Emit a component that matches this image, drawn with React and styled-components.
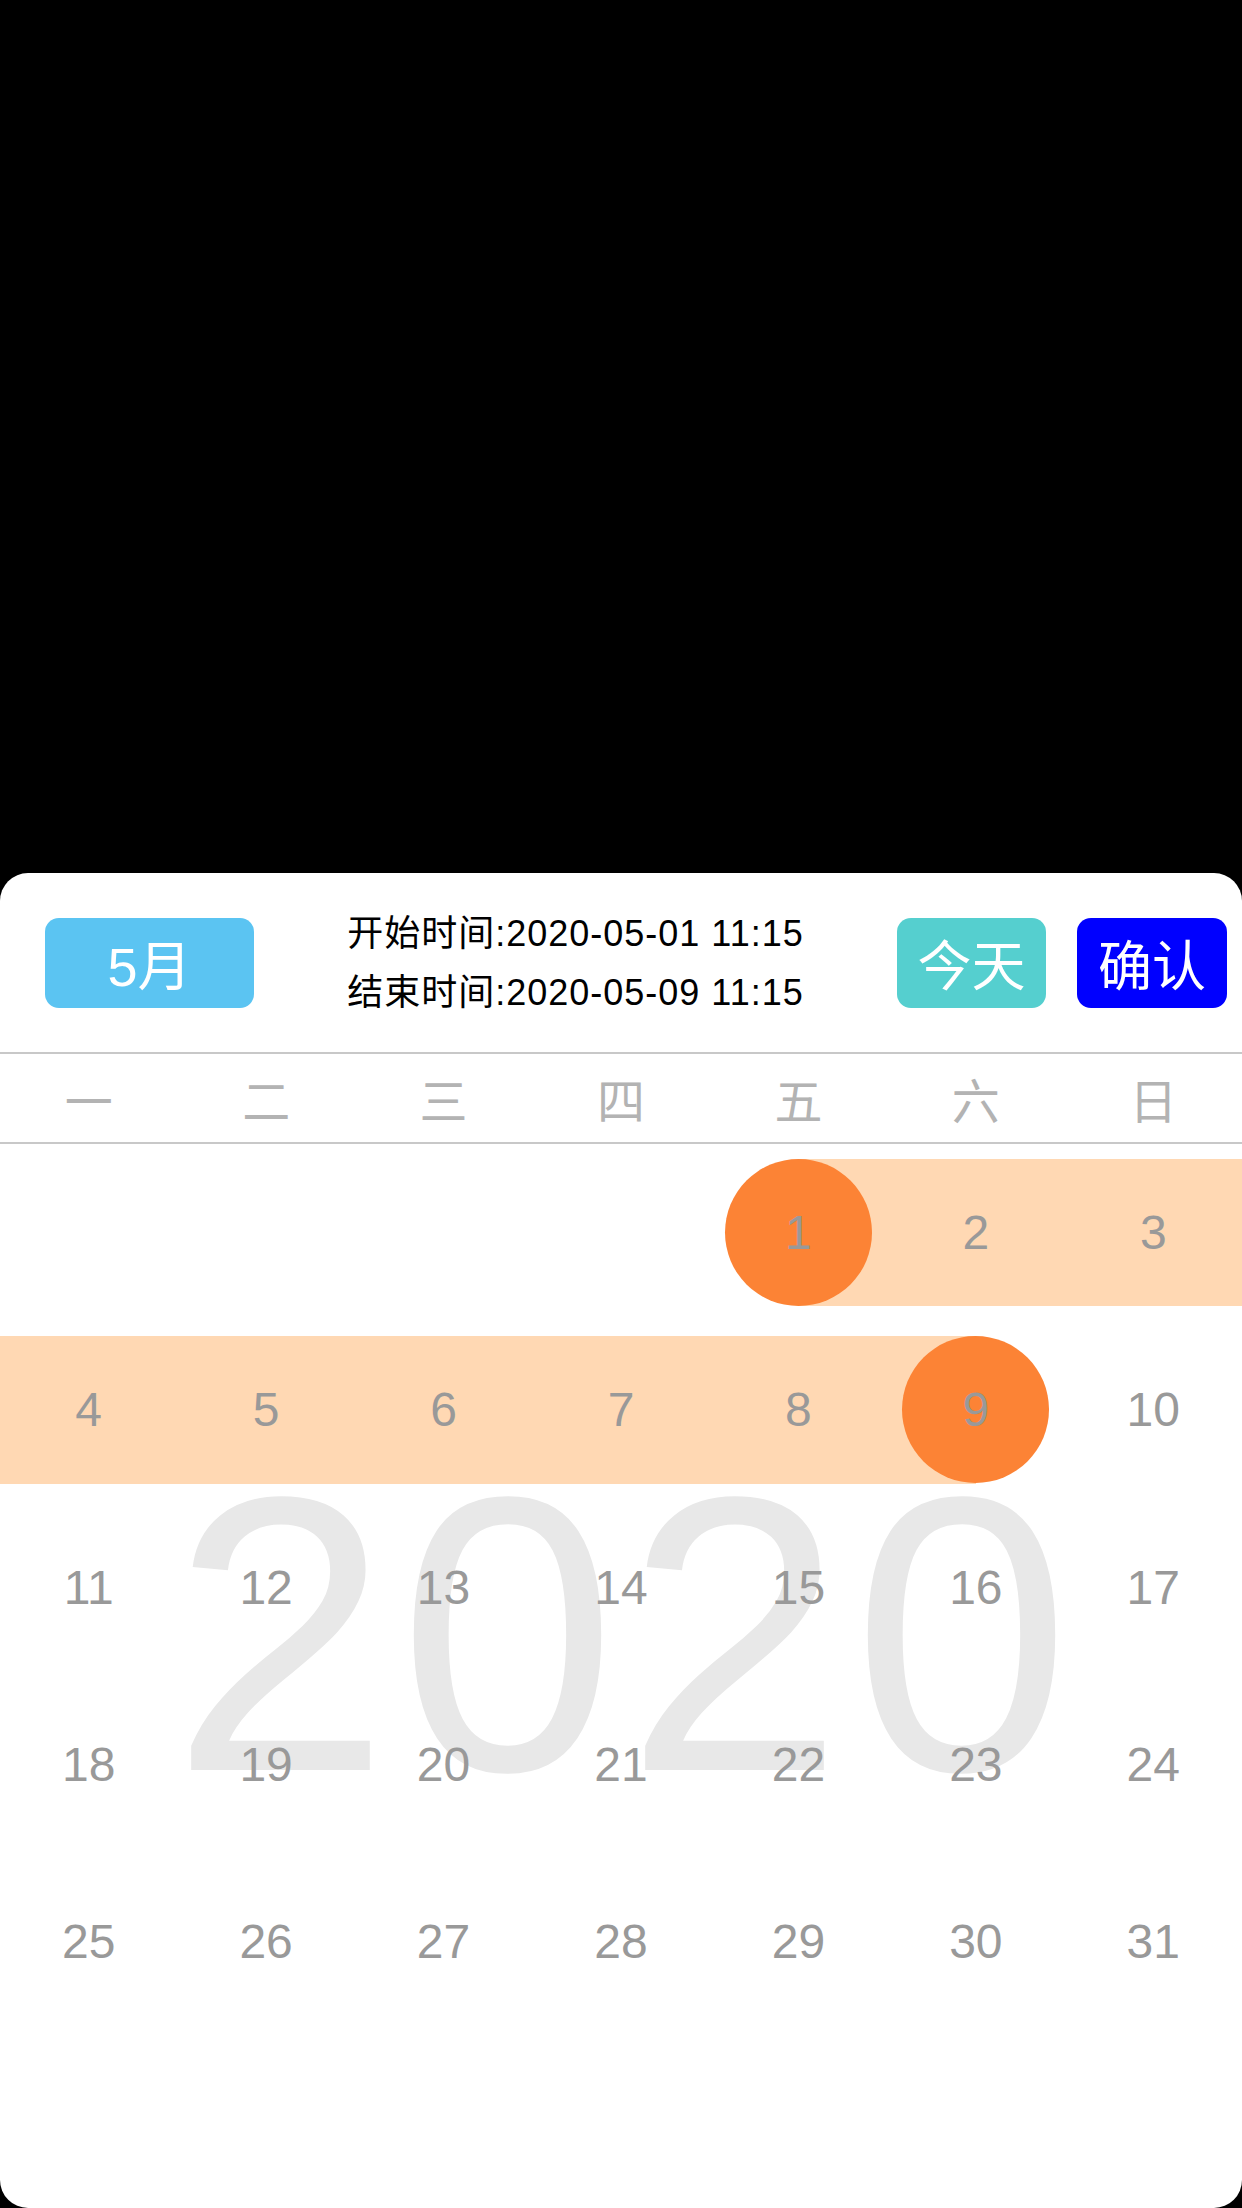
import styled, { createGlobalStyle } from "styled-components";

const GlobalStyle = createGlobalStyle`
  html, body {
    margin: 0;
    padding: 0;
    background: #000;
  }
  * {
    box-sizing: border-box;
  }
`;

const FONT = `"Liberation Sans", "Noto Sans CJK SC", sans-serif`;

const Page = styled.div`
  height: 2208px;
  display: flex;
  flex-direction: column;
  justify-content: flex-end;
  font-family: ${FONT};
`;

const Sheet = styled.div`
  height: 1335px;
  background: #fff;
  border-radius: 28px;
  display: flex;
  flex-direction: column;
  overflow: hidden;
`;

const Header = styled.div`
  height: 181px;
  flex-shrink: 0;
  display: flex;
  align-items: center;
  padding: 0 15px 0 45px;
  border-bottom: 2px solid #c8c8c8;
`;

const Button = styled.div`
  width: ${({ $w }) => $w}px;
  height: 90px;
  flex-shrink: 0;
  display: flex;
  align-items: center;
  justify-content: center;
  border-radius: 14px;
  background: ${({ $bg }) => $bg};
  color: #fff;
  font-size: 54px;
  margin-left: ${({ $gap }) => $gap || 0}px;
`;

const Times = styled.div`
  flex: 1;
  display: flex;
  flex-direction: column;
  align-items: center;
  font-size: 36px;
  line-height: 59px;
  letter-spacing: 1px;
  color: #000;
`;

const WeekRow = styled.div`
  height: 90px;
  flex-shrink: 0;
  display: grid;
  grid-template-columns: repeat(7, 1fr);
  border-bottom: 2px solid #c8c8c8;
`;

const WeekDay = styled.div`
  display: flex;
  align-items: center;
  justify-content: center;
  font-size: 48px;
  color: #b3b3b3;
`;

const Grid = styled.div`
  flex: 1;
  position: relative;
  display: grid;
  grid-template-columns: repeat(7, 1fr);
  grid-template-rows: repeat(6, 1fr);
`;

const Watermark = styled.div`
  position: absolute;
  top: 294px;
  left: 0;
  right: 0;
  text-align: center;
  font-size: 392px;
  line-height: 1;
  letter-spacing: 9px;
  text-indent: 9px;
  color: #e8e8e8;
  pointer-events: none;
`;

const Cell = styled.div`
  position: relative;
  display: flex;
  align-items: center;
  justify-content: center;

  &::before {
    content: "";
    display: ${({ $band }) => ($band ? "block" : "none")};
    position: absolute;
    top: 15px;
    bottom: 15px;
    left: ${({ $band }) => ($band === "right" ? "50%" : "0")};
    right: ${({ $band }) => ($band === "left" ? "50%" : "0")};
    background: #ffd8b3;
  }
`;

const Day = styled.span`
  position: relative;
  z-index: 1;
  width: 147px;
  height: 147px;
  border-radius: 50%;
  display: flex;
  align-items: center;
  justify-content: center;
  font-size: 48px;
  color: #999;
  background: ${({ $picked }) => ($picked ? "#fc8335" : "transparent")};
`;

const weekdays = ["一", "二", "三", "四", "五", "六", "日"];

const bandFor = (d) => {
  if (d === 1) return "right";
  if (d === 9) return "left";
  if (d > 1 && d < 9) return "full";
  return null;
};

export default function App() {
  const offset = 4;
  const cells = [];
  for (let i = 0; i < 42; i++) {
    const d = i - offset + 1;
    cells.push(d >= 1 && d <= 31 ? d : null);
  }

  return (
    <Page>
      <GlobalStyle />
      <Sheet>
        <Header>
          <Button $w={209} $bg="#5bc4f2">5月</Button>
          <Times>
            <div>开始时间:2020-05-01 11:15</div>
            <div>结束时间:2020-05-09 11:15</div>
          </Times>
          <Button $w={149} $bg="#55cfcf">今天</Button>
          <Button $w={150} $bg="#0000ff" $gap={31}>确认</Button>
        </Header>
        <WeekRow>
          {weekdays.map((w) => (
            <WeekDay key={w}>{w}</WeekDay>
          ))}
        </WeekRow>
        <Grid>
          <Watermark>2020</Watermark>
          {cells.map((d, i) => (
            <Cell key={i} $band={d ? bandFor(d) : null}>
              {d && <Day $picked={d === 1 || d === 9}>{d}</Day>}
            </Cell>
          ))}
        </Grid>
      </Sheet>
    </Page>
  );
}
